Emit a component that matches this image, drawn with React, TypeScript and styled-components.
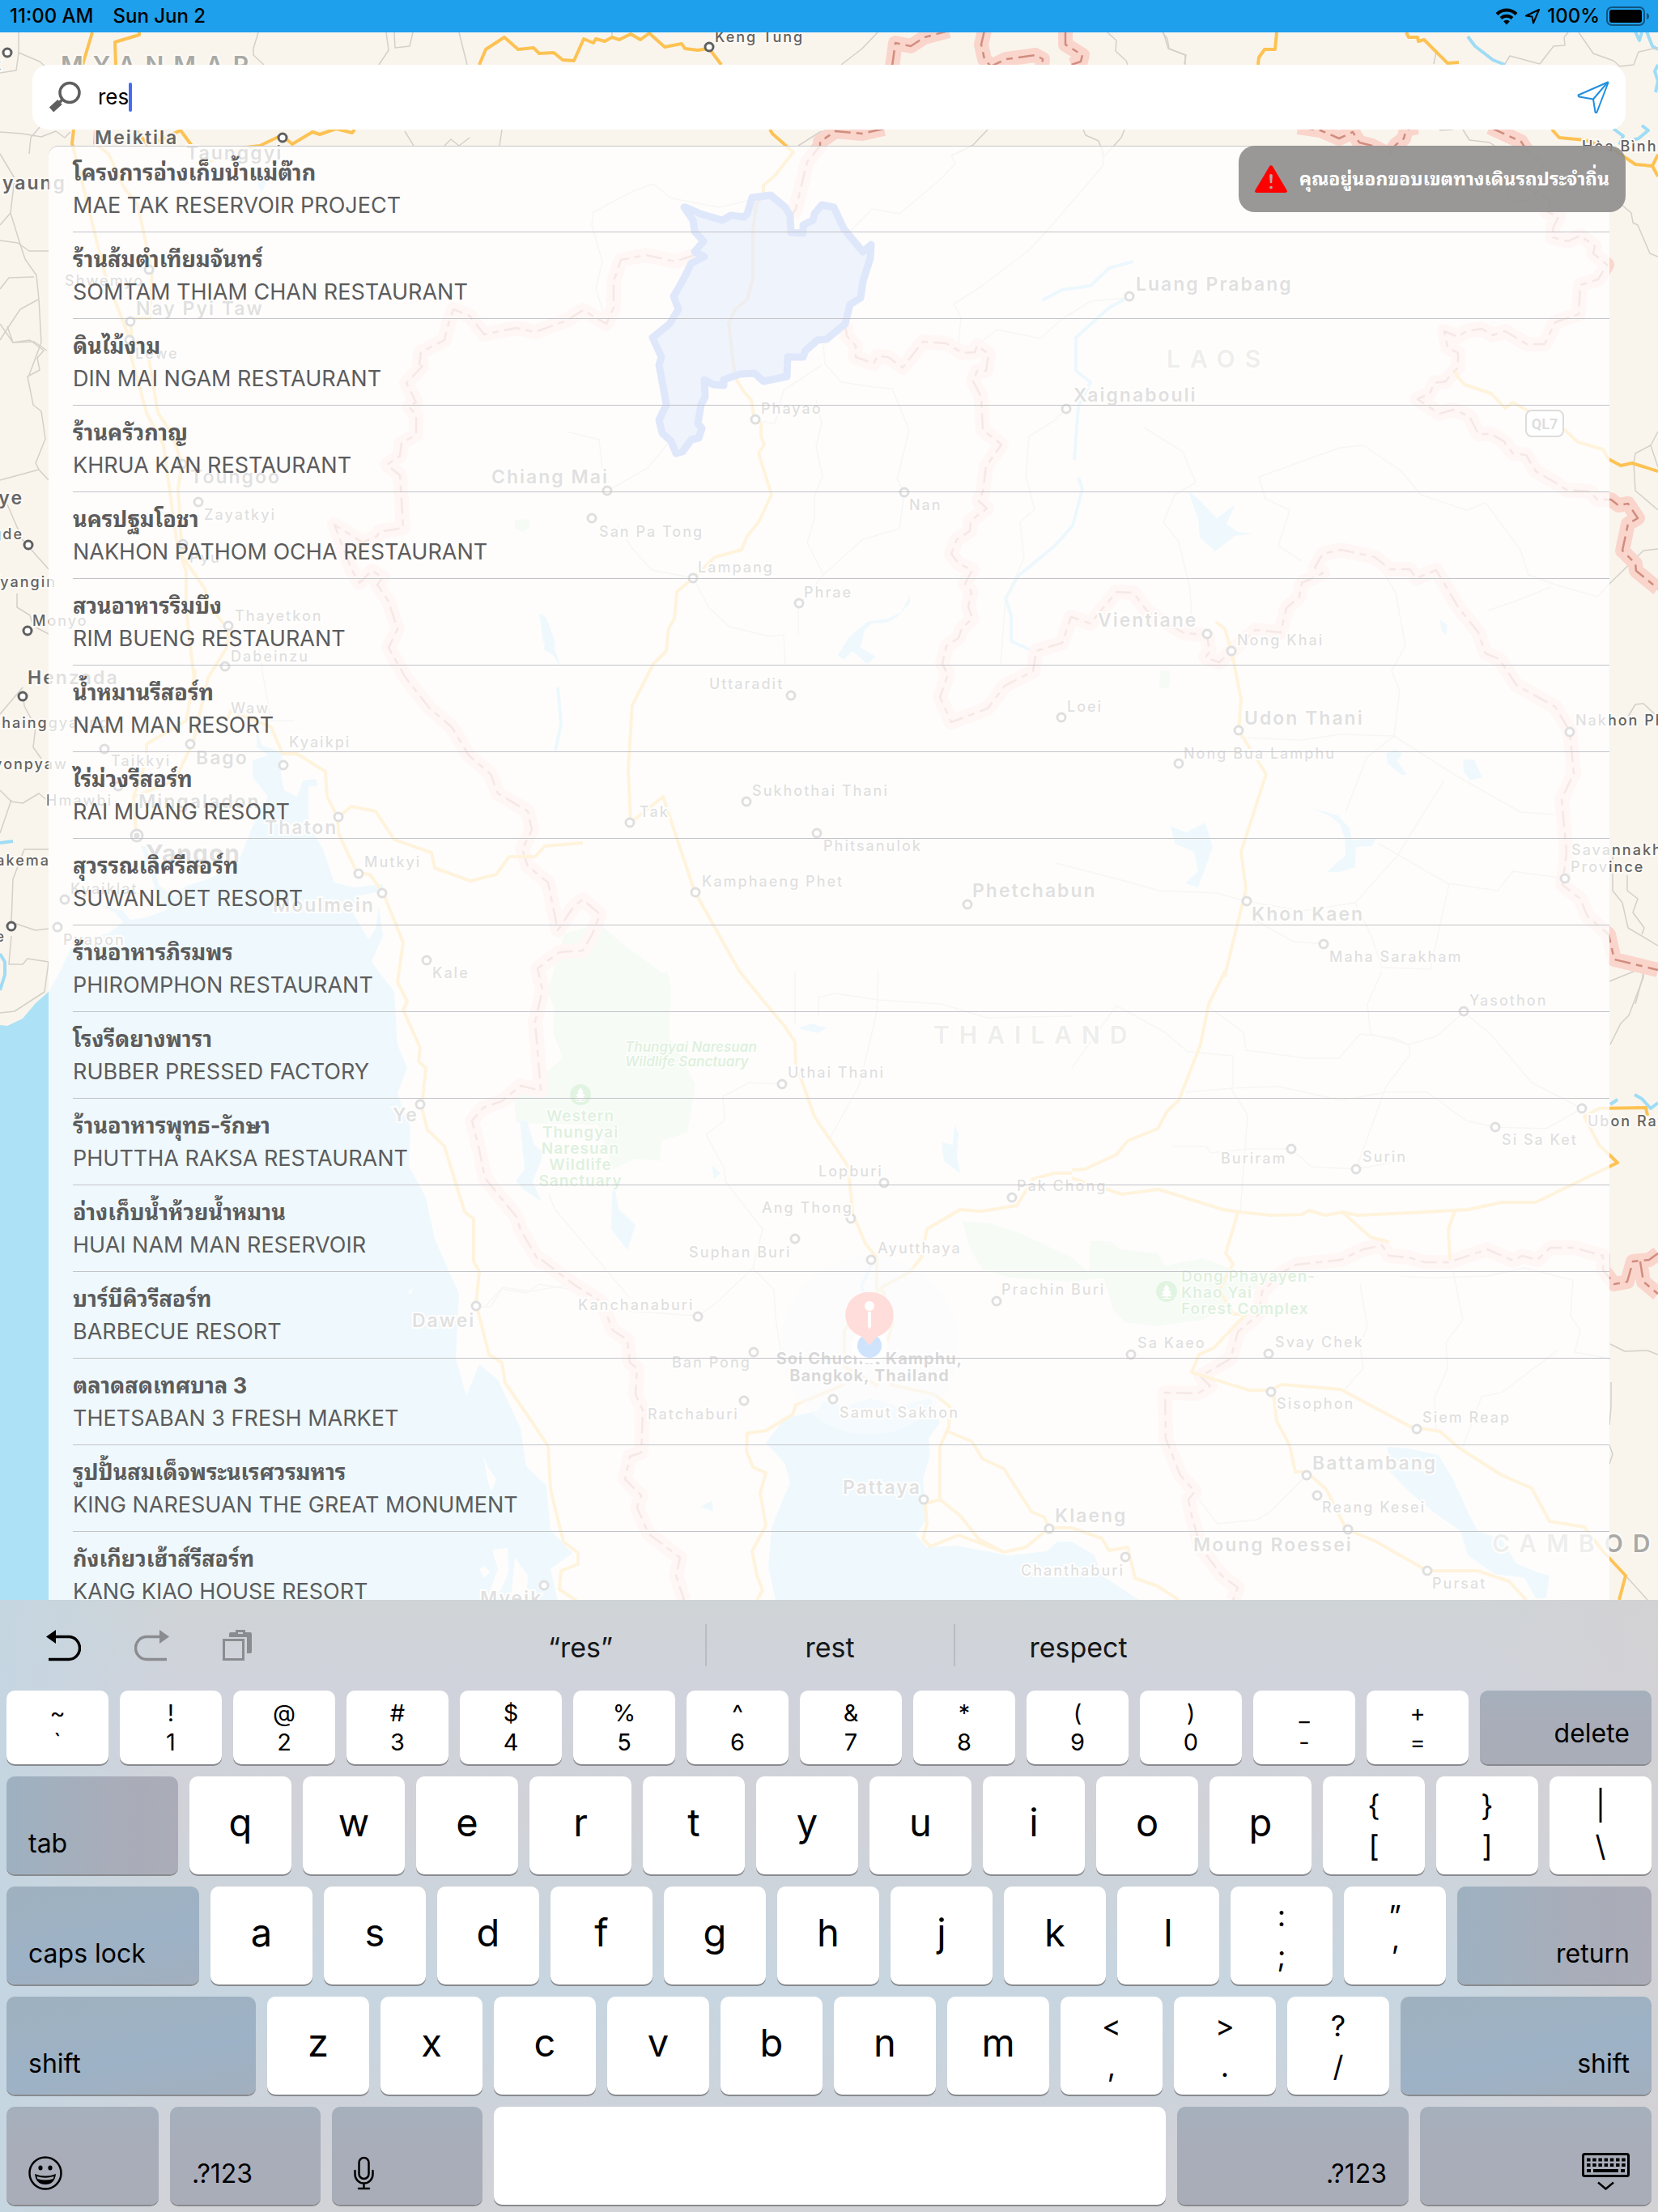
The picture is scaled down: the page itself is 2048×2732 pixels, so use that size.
import React, { useState } from "react";
import styled, { createGlobalStyle, css } from "styled-components";

/* ---------------------------------------------------------------- theme */

const ink = "#5c5c5c";
const sans = `Inter, "Noto Sans Thai Looped", Loma, "Noto Sans", "Noto Sans Thai", sans-serif`;

const GlobalStyle = createGlobalStyle`
  *, *::before, *::after { box-sizing: border-box; }
  body { margin: 0; background: #f9f5ed; font-family: ${sans}; color: #000; }
  button { font: inherit; color: inherit; border: 0; padding: 0; background: none; cursor: pointer; }
  ul { list-style: none; margin: 0; padding: 0; }
`;

/* ---------------------------------------------------------------- shell */

const Screen = styled.div`
  position: relative;
  display: flex;
  flex-direction: column;
  height: 100vh;
  overflow: hidden;
  background: #f9f5ed;
`;

const Backdrop = styled.svg`
  position: absolute;
  inset: 0;
  width: 100%;
  height: 100%;
`;

const StatusBar = styled.header`
  position: relative;
  display: flex;
  align-items: center;
  gap: 24px;
  height: 40px;
  padding: 0 10px 0 12px;
  background: #1fa0ec;
  font-size: 24px;
  line-height: 40px;
  font-weight: 500;
`;

const StatusIcons = styled.div`
  display: flex;
  align-items: center;
  gap: 8px;
  margin-left: auto;
`;

const Content = styled.main`
  position: relative;
  flex: 1;
  min-height: 0;
  display: flex;
  flex-direction: column;
  padding-top: 40px;
`;

/* --------------------------------------------------------------- search */

const SearchBar = styled.form`
  flex: none;
  display: flex;
  align-items: center;
  height: 80px;
  margin: 0 40px 20px;
  padding: 0 20px;
  border-radius: 20px;
  background: #fff;
`;

const SearchLabel = styled.label`
  display: flex;
  margin-right: 20px;
`;

const SearchInput = styled.input`
  field-sizing: content;
  border: 0;
  padding: 0;
  outline: none;
  background: none;
  font-family: ${sans};
  font-size: 26px;
  line-height: 40px;
  color: #000;
  caret-color: transparent;
`;

const Caret = styled.span`
  width: 4px;
  height: 36px;
  border-radius: 2px;
  background: #456cf0;
`;

const LocateButton = styled.button`
  display: flex;
  margin-left: auto;
`;

/* -------------------------------------------------------------- results */

const Results = styled.ul`
  flex: 1;
  min-height: 0;
  margin: 0 60px;
  overflow: hidden;
  border-top: 1px solid #c8c7cc;
  border-radius: 12px 0 0 0;
  background: rgba(255, 255, 255, 0.8);
`;

const Result = styled.li`
  height: 107px;
  margin-left: 30px;
  border-bottom: 1px solid #c3c2c7;

  &:first-child {
    height: 106px;
  }
`;

const ResultButton = styled.button`
  display: flex;
  flex-direction: column;
  justify-content: flex-end;
  width: 100%;
  height: 100%;
  padding-bottom: 12px;
  text-align: left;
  color: ${ink};
  white-space: nowrap;
`;

const ThaiName = styled.span`
  font-size: 27px;
  line-height: 40px;
  font-weight: 700;
`;

const LatinName = styled.span`
  font-size: 27px;
  line-height: 40px;
`;

const Alert = styled.div`
  position: absolute;
  top: 140px;
  right: 40px;
  display: flex;
  align-items: center;
  gap: 15px;
  height: 82px;
  padding: 0 20px;
  border-radius: 20px;
  background: rgba(142, 141, 140, 0.9);
  color: #fff;
  font-size: 23px;
  line-height: 40px;
  font-weight: 700;
  white-space: nowrap;
`;

/* ------------------------------------------------------------- keyboard */

const Keyboard = styled.section`
  position: relative;
  flex: none;
  display: flex;
  flex-direction: column;
  gap: 15px;
  padding: 0 8px 9px;
  background: linear-gradient(90deg, rgba(196, 214, 226, 0.9) 0, rgba(196, 214, 226, 0) 220px),
    linear-gradient(270deg, rgba(211, 209, 212, 0.9) 0, rgba(211, 209, 212, 0) 240px),
    linear-gradient(
      #cfd4d6 0%,
      #d0d3dc 14%,
      #d1d2d8 36%,
      #ccd4dc 48%,
      #c7d6e1 64%,
      #cad4dd 76%,
      #d0d2d9 86%,
      #d2d3d7 100%
    );
`;

const Toolbar = styled.div`
  display: grid;
  grid-template-columns: 1fr auto 1fr;
  align-items: center;
  height: 112px;
  margin-bottom: -15px;
`;

const EditTools = styled.div`
  display: flex;
  gap: 66px;
  padding-left: 49px;
`;

const ToolButton = styled.button`
  display: flex;
  color: #000;

  &:disabled {
    color: #8a8c90;
  }
`;

const Suggestions = styled.div`
  display: flex;
`;

const Suggestion = styled.button`
  width: 307px;
  height: 52px;
  padding-top: 6px;
  font-size: 34px;
  line-height: 46px;
  color: #15171a;

  & + & {
    border-left: 2px solid #b9bcc3;
  }
`;

const KeyRow = styled.div<{ $short?: boolean }>`
  display: flex;
  gap: 14px;
  height: ${(p) => (p.$short ? 91 : 121)}px;
`;

type Tone = "light" | "grey" | "cool" | "mixed";

const tones: Record<Tone, string> = {
  light: "#fff",
  grey: "linear-gradient(#a5b0bc, #a9adb9 45%, #a9adb8)",
  cool: "linear-gradient(170deg, #9fb1bf, #9db2c6 60%, #a2afbe)",
  mixed: "linear-gradient(90deg, #9eb1c1, #a8adb9 60%, #abacb7)",
};

const Key = styled.button<{ $grow?: number; $tone?: Tone; $align?: "start" | "end" }>`
  flex: ${(p) => p.$grow ?? 126} 1 0;
  min-width: 0;
  display: flex;
  align-items: center;
  justify-content: center;
  border-radius: 10px;
  background: ${(p) => tones[p.$tone ?? "light"]};
  box-shadow: 0 2px 0 #888a8e;
  font-size: 47px;
  line-height: 58px;
  ${(p) =>
    p.$align &&
    css`
      align-items: flex-end;
      justify-content: flex-${p.$align};
    `}
`;

const Caption = styled.span`
  display: flex;
  padding: 0 27px 18px;
  font-size: 32px;
  line-height: 40px;
  white-space: nowrap;
`;

const Letter = styled.span`
  padding-bottom: 8px;
`;

const Pair = styled.span<{ $small?: boolean }>`
  display: flex;
  flex-direction: column;
  align-items: center;
  font-size: ${(p) => (p.$small ? 29 : 36)}px;
  line-height: ${(p) => (p.$small ? 36 : 50)}px;
`;

/* ------------------------------------------------------------------ map */

/* Survey sheets: each one has its own grid, projected to map coordinates. */
const sheet =
  (x: number, y: number, w: number, h: number, cols: number, rows: number) =>
  (...p: number[]) => {
    const out: string[] = [];
    for (let i = 0; i < p.length; i += 2) {
      out.push(`${Math.round(x + (p[i] * w) / cols)},${Math.round(y + (p[i + 1] * h) / rows)}`);
    }
    return out.join(" ");
  };

const nw = sheet(0, 0, 700, 480, 1568, 1440);
const ne = sheet(1400, 0, 648, 560, 1568, 1568);
const north = sheet(700, 180, 700, 640, 1568, 1568);
const west = sheet(0, 780, 720, 640, 1568, 1568);
const sw = sheet(0, 1400, 720, 620, 1568, 1568);
const south = sheet(600, 1200, 724, 780, 1568, 1568);
const se = sheet(1324, 1200, 724, 780, 1568, 1568);
const nwLow = sheet(0, 400, 720, 480, 1568, 1440);
const east = sheet(1304, 480, 744, 760, 1568, 1568);
const top = sheet(640, 30, 860, 170, 1568, 510);
const whole = sheet(0, 0, 2048, 2732, 1175, 1568);

const seas = [
  `${west(0, 1190, 20, 1193, 60, 1170, 95, 1125, 130, 1090, 165, 1020, 190, 960, 240, 930, 290, 915, 330, 880, 310, 850, 265, 825, 330, 845, 350, 872, 395, 865, 450, 840, 420, 790, 400, 720, 380, 650, 395, 650, 430, 770, 470, 800, 500, 770, 560, 750, 640, 700, 675, 600, 720, 500, 680, 440, 680, 390, 720, 375, 690, 350, 690, 300, 705, 345, 760, 365, 755, 430, 765, 480, 800, 500, 815, 450, 850, 445, 855, 465, 830, 470, 830, 580, 870, 660, 900, 760, 950, 775, 1030, 765, 1030, 785, 960, 800, 950, 850, 990, 930, 1010, 900, 1020, 830, 1030, 920, 1000, 1000, 1060, 1090, 1070, 1250, 1095, 1320, 1070, 1400, 1105, 1500)} ${sw(1100, 100, 1145, 200, 1170, 330, 1235, 500, 1225, 700, 1255, 820, 1290, 720, 1340, 770, 1400, 920, 1415, 1040, 1470, 1100, 1480, 1240, 1540, 1310, 1480, 1360, 1500, 1460, 0, 1460)}`,
  `${south(750, 1170, 800, 1110, 890, 1090, 900, 1065, 960, 1080, 1030, 1060, 1100, 1080, 1190, 1060, 1215, 1120, 1185, 1160, 1190, 1200, 1170, 1260, 1175, 1320, 1180, 1360, 1150, 1400, 1180, 1430, 1260, 1425, 1400, 1450, 1500, 1440, 1530, 1415, 1568, 1415)} ${se(60, 1450, 80, 1500, 180, 1560)} ${south(775, 1560, 755, 1480, 765, 1380, 800, 1300, 815, 1270, 800, 1220)}`,
  se(845, 1180, 900, 1185, 980, 1200, 1020, 1260, 1060, 1340, 1085, 1390, 1150, 1410, 1190, 1470, 1240, 1490, 1278, 1500, 1270, 1556, 1240, 1556, 1210, 1505, 1130, 1495, 1060, 1450, 1040, 1390, 965, 1340, 900, 1290, 850, 1240),
  east(345, 262, 375, 285, 420, 330, 468, 295, 445, 345, 475, 365, 515, 370, 465, 375, 415, 415, 375, 380, 370, 335),
  east(300, 1115, 340, 1130, 390, 1105, 408, 1170, 395, 1210, 370, 1270, 338, 1260, 370, 1230, 360, 1180, 310, 1160),
  east(670, 1070, 735, 1088, 765, 1120, 772, 1150, 835, 1145, 825, 1165, 782, 1168, 780, 1220, 740, 1232, 705, 1232, 735, 1205, 755, 1190, 752, 1145, 740, 1110, 715, 1090),
  east(860, 930, 885, 918, 902, 930, 890, 950, 915, 985, 900, 985, 865, 955),
  east(1060, 945, 1090, 945, 1110, 990, 1080, 998, 1062, 975),
  east(998, 588, 1018, 600, 1017, 630, 1005, 618),
  north(750, 1540, 780, 1490, 805, 1465, 830, 1440, 890, 1432, 925, 1410, 950, 1360, 950, 1385, 915, 1425, 885, 1442, 845, 1445, 825, 1465, 812, 1520, 855, 1545, 830, 1568, 790, 1530, 765, 1555),
  west(1480, 0, 1495, 60, 1510, 110, 1488, 70, 1462, 55),
  nwLow(1450, 1070, 1470, 1090, 1495, 1180, 1480, 1220, 1462, 1180),
  south(90, 370, 110, 370, 130, 430, 155, 450, 125, 520, 150, 570, 100, 540, 80, 520, 105, 490),
  south(340, 510, 355, 590, 400, 630, 380, 692, 335, 640),
  south(1255, 380, 1265, 400, 1260, 460, 1270, 500, 1225, 470, 1220, 425, 1250, 430),
  south(835, 140, 870, 128, 915, 140, 885, 152),
  south(605, 480, 628, 500, 610, 515),
  south(575, 1328, 605, 1312, 608, 1340),
  nw(720, 640, 740, 620, 735, 680, 725, 710, 715, 690),
];

const islands = [
  sw(1300, 1005, 1312, 1040, 1335, 1080, 1322, 1120, 1310, 1080),
  sw(1325, 1300, 1365, 1295, 1368, 1370, 1345, 1430, 1315, 1440, 1340, 1360),
  sw(1385, 1325, 1420, 1380, 1415, 1456, 1375, 1456, 1380, 1380),
  sw(1290, 1360, 1305, 1350, 1318, 1370, 1302, 1388),
  sw(1095, 495, 1110, 484, 1104, 502),
];

const parks = [
  `${whole(392, 690, 400, 662, 425, 655, 440, 668, 470, 690)} ${south(485, 0, 497, 40, 490, 160, 515, 200, 560, 280, 540, 400, 470, 420, 465, 470, 400, 465, 340, 490, 300, 380, 80, 375, 75, 290, 150, 260, 205, 215, 180, 150, 185, 90, 165, 50)}`,
  `${south(1275, 620, 1350, 625, 1430, 650, 1568, 710)} ${se(45, 745, 50, 670, 105, 670, 130, 690, 230, 700, 250, 730, 350, 712, 430, 740, 520, 780, 440, 800, 380, 850, 350, 865, 225, 880, 140, 870, 110, 840, 85, 760, 0, 770)} ${south(1400, 760, 1330, 740, 1295, 690)}`,
  east(272, 718, 298, 718, 298, 760, 270, 765),
  nwLow(1385, 725, 1425, 722, 1425, 760, 1405, 770, 1385, 760),
];

const rivers = [
  north(1568, 350, 1500, 370, 1450, 425, 1370, 435, 1315, 468),
  north(1555, 458, 1500, 490, 1410, 580, 1410, 680, 1450, 715, 1415, 790, 1405, 950),
  north(1415, 1005, 1427, 1040, 1400, 1150, 1350, 1210, 1250, 1300, 1215, 1370, 1230, 1420, 1230, 1500, 1290, 1530),
  ne(1000, 125, 1020, 160, 1075, 208, 1110, 224),
  ne(1500, 110, 1512, 140, 1520, 112),
  ne(1535, 110, 1550, 160, 1568, 170),
  ne(1568, 225, 1558, 245, 1568, 280, 1560, 320),
  ne(1435, 445, 1465, 470, 1455, 495, 1510, 480, 1540, 450, 1520, 435),
  west(0, 640, 35, 635),
  west(0, 975, 12, 1000, 14, 1040, 0, 1085),
  se(1440, 330, 1460, 318),
  se(1505, 305, 1525, 315, 1548, 340, 1568, 325),
  west(1500, 170, 1510, 280, 1495, 360),
  south(1030, 730, 1005, 780, 1020, 820),
  east(1455, 1435, 1500, 1462, 1568, 1478),
];

const lanes = [
  nw(52, 120, 52, 195, 110, 228, 125, 245),
  nw(715, 120, 700, 180, 702, 205, 730, 240),
  nw(1068, 120, 1075, 185, 1048, 240),
  nw(1090, 120, 1092, 178, 1133, 170, 1143, 120),
  nw(1270, 120, 1292, 240),
  nw(0, 490, 60, 495, 115, 508, 155, 485, 180, 510, 195, 490),
  nw(0, 270, 45, 260, 52, 195),
  nw(110, 470, 85, 510, 80, 570),
  nw(0, 570, 40, 660, 30, 790, 55, 905, 70, 960, 100, 1020, 108, 1110, 115, 1270, 80, 1390),
  nw(30, 790, 0, 835),
  nw(0, 890, 50, 900, 80, 930, 135, 930),
  nw(0, 1260, 25, 1210, 55, 1145, 105, 1110),
  nw(0, 1070, 25, 1028, 95, 1025),
  nw(0, 1200, 35, 1270, 95, 1265, 130, 1300),
  nw(1120, 485, 1145, 540),
  nw(1230, 540, 1248, 515, 1270, 540, 1300, 510),
  nw(1388, 480, 1382, 540),
  nwLow(20, 10, 35, 70, 80, 60, 118, 100, 100, 125, 107, 170, 75, 195, 90, 300, 110, 325, 123, 425, 95, 515, 105, 540, 131, 580),
  nwLow(0, 578, 105, 540),
  nwLow(20, 670, 60, 800, 131, 910),
  nwLow(45, 1000, 45, 1050, 80, 1080, 90, 1120, 131, 1150),
  west(60, 180, 65, 225, 95, 290, 90, 350, 112, 385),
  west(60, 170, 0, 250),
  west(0, 480, 30, 515, 60, 520, 105, 490, 131, 515),
  west(30, 510, 0, 610),
  west(131, 660, 65, 660, 35, 750, 30, 880, 95, 905, 131, 900),
  west(30, 920, 25, 1008, 60, 1008, 75, 990, 131, 1000, 120, 1090, 40, 1150, 0, 1153),
  top(211, 30, 211, 45),
  top(810, 30, 775, 90, 728, 150),
  top(1328, 30, 1347, 60, 1345, 100, 1370, 135, 1372, 150),
  top(1452, 30, 1463, 55, 1466, 90, 1503, 113, 1502, 150),
  top(1058, 390, 1022, 450, 975, 490),
  top(1273, 390, 1278, 412, 1308, 432, 1320, 490, 1358, 420, 1365, 390),
  top(630, 450, 680, 400, 710, 392),
  ne(90, 112, 105, 168, 157, 190, 153, 222),
  ne(905, 180, 898, 222),
  ne(1215, 222, 1255, 160, 1290, 158, 1288, 130, 1300, 112),
  ne(1330, 112, 1375, 185, 1435, 210, 1455, 230, 1495, 225, 1510, 180, 1568, 165),
  ne(1110, 222, 1125, 192, 1215, 220),
  ne(985, 448, 1005, 485, 1065, 492, 1100, 520),
  ne(915, 450, 955, 448),
  ne(1440, 690, 1487, 735, 1493, 770, 1508, 778, 1545, 875, 1568, 887),
  east(1568, 110, 1548, 145, 1568, 200),
  east(1548, 145, 1510, 165, 1505, 190, 1508, 260, 1568, 310),
  east(1442, 497, 1530, 412, 1568, 408),
  east(1490, 835, 1508, 805, 1530, 802, 1560, 830),
  east(1450, 1190, 1450, 1280, 1475, 1310, 1490, 1375, 1568, 1420),
  east(1488, 1240, 1488, 1280, 1515, 1300, 1503, 1335, 1533, 1375, 1525, 1390),
  east(1442, 1510, 1530, 1475, 1528, 1500, 1508, 1568),
  se(1440, 180, 1468, 128, 1490, 108, 1528, 15, 1528, 0),
  se(1440, 925, 1480, 943, 1540, 940, 1568, 950),
  se(1443, 1020, 1443, 1080, 1438, 1125),
  se(1438, 1175, 1446, 1198, 1438, 1222),
  se(1482, 1500, 1540, 1560),
  north(110, 540, 80, 430, 98, 350, 70, 240, 75, 200, 180, 140, 240, 115, 290, 160, 420, 185, 510, 165),
  north(785, 260, 845, 190, 920, 205, 1030, 105, 1075, 55, 1065, 30, 1120, 0),
  north(1480, 0, 1485, 60, 1350, 230, 1280, 315, 1150, 425, 1070, 480, 1090, 520, 1085, 600),
  north(1140, 600, 1190, 555, 1310, 582, 1370, 525, 1450, 470, 1550, 460),
  north(710, 600, 715, 660, 760, 715, 850, 730, 900, 735, 948, 860, 915, 1010, 934, 1048, 920, 1160, 820, 1190, 710, 1298, 640, 1395, 640, 1480),
  north(520, 830, 575, 840, 600, 740, 705, 665),
  north(690, 770, 705, 840, 690, 910, 708, 1000, 685, 1060, 685, 1130, 665, 1200, 710, 1298),
  north(0, 865, 90, 890, 100, 1000, 110, 1045, 225, 975, 290, 890),
  north(140, 1150, 180, 1215, 235, 1285, 349, 1308, 395, 1400, 450, 1455, 560, 1485, 600, 1480, 605, 1568),
  north(1382, 797, 1350, 830, 1280, 880, 1270, 1000, 1295, 1100, 1255, 1140, 1265, 1250, 1215, 1370, 1200, 1568),
  east(230, 100, 330, 160, 365, 240, 310, 270, 280, 340, 320, 390, 350, 510, 355, 590),
  east(740, 150, 530, 225, 545, 280, 610, 310, 580, 400, 640, 440),
  east(740, 150, 800, 145, 900, 210, 950, 270, 1070, 310, 1120, 290, 1210, 410, 1230, 475, 1300, 500, 1410, 530, 1442, 497),
  east(1125, 565, 1200, 540, 1290, 505),
  east(850, 460, 885, 520, 910, 655, 875, 720, 895, 770, 880, 885, 810, 940, 755, 1080),
  east(480, 890, 640, 895, 740, 880, 880, 885, 1040, 985, 1210, 1080, 1300, 1085),
  east(0, 1210, 180, 1255, 270, 1280, 420, 1285, 497, 1305, 640, 1330, 780, 1310, 890, 1190, 1010, 1000),
  east(840, 1160, 1020, 1260, 1150, 1280, 1190, 1230, 1325, 1248),
  east(697, 1415, 620, 1410, 510, 1350),
  east(780, 1310, 820, 1390, 850, 1475, 975, 1480, 1025, 1260),
  se(0, 240, 120, 85, 250, 150, 310, 200, 430, 210, 430, 290, 305, 300),
  se(370, 90, 460, 150, 465, 195, 625, 215, 715, 215, 770, 155, 860, 165, 900, 180, 975, 160, 1048, 100),
  se(830, 0, 790, 80, 800, 155, 900, 180, 905, 205, 840, 285, 760, 490),
  se(425, 290, 555, 285, 720, 320, 840, 300, 950, 300, 1055, 370, 1132, 386, 1270, 390, 1364, 340),
  se(1048, 100, 1120, 155, 1230, 275, 1364, 340),
  se(270, 435, 360, 435, 370, 450, 470, 440, 587, 440, 640, 485, 760, 490, 880, 470),
  se(425, 290, 470, 355, 450, 597),
  se(770, 775, 790, 880, 770, 930, 780, 985, 730, 1037),
  se(880, 755, 960, 760, 1110, 755, 1210, 735, 1340, 765, 1335, 855, 1360, 890, 1345, 945, 1440, 960),
  se(1020, 745, 1045, 865, 1000, 920, 1005, 985, 970, 1060, 975, 1135),
  se(1045, 1180, 1095, 1055, 1150, 1045, 1300, 940),
  se(628, 1250, 530, 1340, 495, 1360, 390, 1370, 340, 1310),
  south(828, 0, 828, 130),
  south(890, 110, 890, 65, 935, 55, 1050, 70, 1220, 80, 1340, 115, 1568, 110),
  south(1050, 0, 1045, 100, 1000, 280, 920, 415),
  south(790, 280, 705, 275, 635, 310, 638, 370, 590, 405, 638, 490, 640, 520, 740, 640, 715, 735, 620, 820, 567, 856),
  south(0, 830, 45, 785, 120, 795, 210, 780, 340, 840, 565, 855),
  south(170, 550, 185, 590, 385, 810),
  south(715, 735, 770, 790, 775, 860, 790, 950),
  sw(1290, 540, 1320, 540, 1350, 485, 1415, 498, 1450, 470, 1550, 490),
  west(690, 0, 705, 120, 730, 270, 790, 270),
];

const roads = [
  nw(255, 120, 228, 240),
  nw(385, 120, 385, 130, 317, 157, 320, 240),
  `${nw(1325, 240, 1345, 183, 1395, 137)} ${top(0, 93, 35, 88, 48, 108, 80, 104, 100, 132, 125, 135, 147, 55, 170, 70, 175, 55, 195, 63, 212, 47, 228, 58, 253, 35, 275, 57, 295, 33, 330, 84, 368, 72, 376, 90, 405, 97, 430, 90, 457, 150)}`,
  `${top(567, 390, 572, 405, 620, 475)} ${north(625, 22, 575, 90, 545, 120, 545, 150, 525, 180, 515, 260, 515, 400, 500, 465, 465, 495, 447, 540, 465, 700, 490, 745, 510, 770, 520, 830, 538, 840, 537, 880, 547, 905, 530, 930, 567, 1055, 530, 1140, 500, 1180, 483, 1222, 410, 1245, 350, 1308, 305, 1350, 297, 1430, 283, 1460, 275, 1530, 240, 1568)} ${whole(448, 500, 445, 545, 447, 583, 470, 565, 492, 632, 524, 688)} ${south(770, 105, 800, 135, 828, 175, 830, 230, 880, 360, 970, 485, 980, 600, 1015, 675, 1047, 710, 1047, 790)}`,
  `${nw(203, 480, 200, 530, 240, 740, 290, 1010, 355, 1240)} ${nwLow(350, 110, 395, 330, 440, 450, 475, 800, 500, 920, 500, 1060, 522, 1320)} ${west(525, 120, 500, 270, 395, 340, 395, 390, 360, 500, 365, 610)}`,
  `${nw(265, 480, 262, 530, 300, 570, 345, 700, 380, 760, 420, 1010, 415, 1180, 360, 1180, 365, 1260, 410, 1310)} ${nwLow(425, 330, 460, 400, 490, 520, 480, 610, 490, 860, 550, 980, 560, 1040, 615, 1130, 610, 1200)} ${west(560, 140, 520, 330, 470, 450, 360, 500)}`,
  nw(375, 480, 410, 540, 500, 483, 530, 540),
  nw(580, 600, 680, 545, 720, 540, 780, 500, 808, 535, 865, 488, 885, 498, 930, 478, 975, 492, 980, 480),
  `${west(610, 270, 620, 240, 730, 290, 760, 370, 800, 370, 875, 425, 880, 500, 908, 560, 910, 610, 960, 730, 995, 735, 1030, 790, 1085, 940, 1070, 1060, 1095, 1120, 1085, 1145, 1130, 1260, 1125, 1300, 1145, 1320, 1135, 1440, 1150, 1510)} ${sw(1160, 0, 1195, 40, 1250, 245, 1275, 265, 1275, 400, 1290, 430, 1280, 530, 1315, 690, 1350, 715, 1360, 780, 1430, 900, 1475, 975, 1480, 1110, 1500, 1205, 1515, 1275, 1555, 1310, 1555, 1345, 1510, 1365, 1505, 1425, 1550, 1460)}`,
  west(910, 560, 945, 530, 1010, 545, 1060, 630, 1160, 670, 1170, 715, 1265, 755, 1335, 735, 1370, 680, 1440, 680, 1465, 650, 1568, 640),
  south(1568, 500, 1520, 500, 1465, 515, 1420, 580, 1325, 595, 1270, 592, 1180, 640, 1165, 710, 1135, 745, 1060, 785, 1090, 870, 1075, 920),
  south(1060, 785, 1010, 830, 960, 890, 960, 980, 1050, 1030),
  south(960, 1025, 830, 1075, 820, 1100, 750, 1140, 700, 1145, 698, 1190, 715, 1230, 750, 1245, 735, 1295, 750, 1375, 713, 1440, 725, 1500, 740, 1535, 725, 1560),
  south(1080, 1025, 1200, 1050, 1240, 1080, 1238, 1130, 1215, 1180, 1215, 1310, 1175, 1320, 1180, 1370, 1170, 1410, 1190, 1428, 1265, 1400, 1385, 1442, 1445, 1430, 1507, 1382, 1568, 1382),
  south(1215, 1310, 1270, 1350, 1320, 1410, 1385, 1442),
  south(1230, 1140, 1300, 1165, 1330, 1210, 1385, 1235, 1460, 1340, 1495, 1355, 1507, 1382),
  se(0, 1382, 80, 1408, 100, 1438, 150, 1430, 170, 1505, 230, 1525, 285, 1560),
  `${se(0, 492, 35, 490, 120, 455, 150, 420, 230, 390, 255, 345, 285, 320, 345, 180, 365, 80, 410, 0)} ${east(440, 1495, 495, 1275, 482, 1180, 547, 982, 477, 870, 482, 790, 457, 668, 440, 612, 417, 595)}`,
  se(0, 512, 135, 552, 232, 541, 405, 592, 450, 597, 535, 605, 615, 603, 635, 593, 678, 605, 725, 597, 765, 605, 900, 600, 1060, 592, 1150, 572, 1240, 572, 1460, 475, 1410, 430, 1370, 360, 1410, 340, 1535, 337, 1540, 358),
  se(725, 600, 800, 660, 850, 672),
  se(1025, 595, 1008, 640, 1012, 715),
  se(445, 597, 430, 640, 412, 700, 432, 725, 395, 790, 430, 850, 465, 850, 380, 935, 340, 950, 320, 995, 475, 1040, 530, 1040, 560, 1025, 720, 1037, 905, 1130, 985, 1142, 1035, 1182, 1150, 1250, 1230, 1283, 1278, 1365, 1370, 1380, 1420, 1440, 1482, 1500, 1465, 1560),
  se(540, 1045, 548, 1115, 583, 1175, 597, 1243, 628, 1243, 680, 1285, 735, 1385, 810, 1413, 950, 1487, 1085, 1487, 1170, 1513, 1215, 1560),
  `${ne(960, 1285, 970, 1305, 990, 1330, 1070, 1362)} ${east(1135, 15, 1170, 50, 1190, 35, 1270, 80, 1325, 105, 1360, 137, 1425, 155, 1440, 180, 1470, 195, 1500, 190, 1568, 210)}`,
  ne(428, 112, 423, 170, 393, 170, 375, 200, 372, 224),
  ne(815, 112, 822, 128, 850, 128, 852, 142, 868, 138, 905, 180, 940, 218, 972, 216),
  ne(1250, 448, 1273, 475, 1350, 485, 1440, 520, 1500, 568, 1550, 575, 1568, 535),
  ne(1550, 575, 1568, 610),
];

const borders = [
  `${top(825, 388, 775, 405, 715, 395, 680, 435)} ${north(700, 0, 665, 50, 645, 140, 635, 190, 622, 210)}`,
  top(842, 155, 850, 70, 885, 82, 915, 48, 970, 25),
  top(1050, 25, 1042, 75, 1050, 130, 1065, 155, 1100, 130, 1165, 115, 1182, 128, 1180, 155),
  top(1232, 25, 1232, 75, 1270, 115, 1268, 138, 1246, 150),
  ne(490, 440, 560, 452, 615, 478, 655, 455, 675, 493, 715, 503, 765, 535, 785, 500, 808, 480, 815, 448, 850, 440),
  `${ne(1065, 440, 1160, 490, 1175, 520, 1230, 560, 1210, 610, 1150, 620, 1110, 665, 1130, 700, 1180, 695, 1210, 660, 1245, 700, 1235, 730, 1270, 750, 1255, 785, 1250, 820, 1300, 835, 1335, 815, 1380, 850, 1375, 875, 1415, 915, 1390, 965, 1335, 985, 1330, 1085, 1260, 1115, 1230, 1190, 1175, 1190, 1110, 1145, 1075, 1160, 1040, 1138, 995, 1145, 970, 1165, 930, 1145, 940, 1200, 970, 1220, 970, 1270, 945, 1300, 935, 1320, 900, 1325, 885, 1360, 850, 1380, 915, 1430, 955, 1418, 1005, 1440, 1030, 1500, 1070, 1500, 1110, 1530)} ${east(1170, 140, 1190, 165, 1225, 170, 1250, 210, 1300, 240, 1330, 258, 1390, 262, 1410, 282, 1445, 282, 1465, 297, 1490, 292, 1515, 330, 1490, 345, 1475, 412, 1510, 445, 1512, 465, 1568, 510)}`,
  `${north(770, 540, 775, 575, 800, 605, 800, 640, 850, 660, 860, 637, 890, 640, 930, 672, 985, 592, 1050, 597, 1095, 628, 1130, 625, 1135, 605, 1168, 630, 1160, 680, 1135, 680, 1125, 712, 1147, 760, 1152, 860, 1202, 905, 1160, 970, 1152, 1045, 1140, 1075, 1162, 1098, 1118, 1135, 1115, 1165, 1080, 1190, 1065, 1235, 1085, 1265, 1122, 1283, 1102, 1325, 1120, 1350, 1110, 1395, 1122, 1430, 1092, 1460, 1085, 1490, 1050, 1515, 1040, 1568)} ${whole(672, 478, 666, 494, 674, 512, 700, 502, 712, 486, 732, 476)} ${north(1300, 1530, 1370, 1505, 1395, 1425, 1450, 1445, 1520, 1350, 1568, 1352)} ${east(240, 570, 330, 620, 395, 630, 400, 670, 390, 685, 425, 698, 457, 668, 520, 615, 585, 620, 600, 560, 635, 530, 640, 495, 695, 470, 675, 455, 695, 420, 745, 410, 830, 430, 870, 460, 920, 460, 940, 483, 990, 463, 1050, 560, 1100, 620, 1120, 675, 1155, 690, 1200, 755, 1300, 810, 1338, 872, 1348, 980, 1318, 1045, 1330, 1180, 1320, 1265, 1365, 1300, 1385, 1345, 1440, 1390, 1455, 1455, 1568, 1482)}`,
  `${north(355, 330, 300, 350, 220, 330, 150, 345, 130, 410, 130, 490, 110, 540, 45, 498, 0, 530)} ${nw(1480, 1230, 1430, 1215, 1340, 1240, 1300, 1170, 1255, 1145, 1240, 1200, 1230, 1260, 1165, 1305, 1160, 1350)} ${nwLow(1130, 110, 1135, 160, 1093, 220, 1120, 290, 1100, 305, 1120, 340, 1120, 410, 1080, 440, 1075, 490, 1040, 522, 1075, 560, 1085, 755, 1020, 770, 1015, 785, 975, 810, 900, 745, 945, 910, 968, 960, 1000, 915, 1030, 940, 1015, 965, 1045, 1030, 1070, 1130, 1045, 1200)} ${west(1090, 140, 1155, 230, 1215, 290, 1260, 375, 1320, 430, 1340, 490, 1420, 545, 1430, 600, 1405, 660, 1420, 710, 1475, 760, 1500, 905, 1545, 830, 1568, 810)} ${whole(425, 648, 420, 662)} ${west(1568, 965, 1505, 970, 1445, 1020, 1460, 1085, 1440, 1180, 1455, 1390, 1400, 1375, 1350, 1420, 1300, 1440, 1270, 1480, 1290, 1568)} ${sw(1305, 140, 1390, 260, 1400, 300, 1450, 400)} ${south(150, 715, 240, 780, 310, 820, 340, 890, 380, 915, 385, 970, 405, 985, 400, 1050, 420, 1090, 415, 1195, 385, 1205, 372, 1260, 415, 1300, 405, 1330, 435, 1395, 520, 1455, 510, 1500, 530, 1560)}`,
  se(1568, 700, 1545, 715, 1500, 720, 1485, 770, 1450, 775, 1420, 740, 1420, 705, 1345, 685, 1280, 685, 1245, 715, 1205, 705, 1180, 718, 1110, 690, 1010, 722, 945, 722, 900, 710, 850, 705, 830, 680, 780, 690, 720, 715, 600, 728, 565, 745, 510, 795, 500, 850, 445, 895, 425, 960, 345, 1005, 370, 1030, 335, 1048, 250, 1045, 252, 1160, 290, 1250, 330, 1290, 312, 1310, 320, 1350, 345, 1430, 400, 1500, 445, 1530, 430, 1560),
  se(1520, 720, 1530, 770, 1568, 800),
];

const zone = north(325, 185, 350, 225, 355, 260, 378, 290, 355, 320, 380, 335, 345, 355, 320, 410, 295, 455, 308, 495, 285, 540, 238, 580, 262, 640, 255, 665, 268, 740, 275, 785, 255, 830, 265, 870, 290, 895, 303, 930, 320, 925, 345, 890, 365, 885, 375, 855, 362, 840, 372, 785, 383, 760, 380, 708, 405, 722, 435, 725, 435, 708, 480, 690, 520, 688, 545, 712, 610, 698, 612, 640, 655, 640, 660, 620, 695, 588, 720, 585, 770, 540, 785, 480, 812, 460, 820, 410, 840, 340, 843, 300, 820, 320, 785, 275, 765, 250, 740, 185, 705, 180, 685, 205, 680, 225, 655, 240, 655, 265, 620, 262, 618, 210, 605, 185, 565, 150, 512, 157, 500, 205, 490, 215, 455, 210, 430, 225, 370, 205, 330, 185);

/* Town rings: x, y on the map. */
const towns: [number, number][] = [
  [9, 65], [876, 58], [349, 170], [184, 333], [161, 397], [160, 420], [225, 573], [245, 620], [226, 672],
  [35, 673], [34, 779], [28, 860], [282, 773], [278, 823], [350, 945], [235, 919], [129, 925], [146, 971],
  [418, 1009], [443, 1079], [472, 1103], [80, 1111], [14, 1144], [71, 1145], [527, 1186], [519, 1364],
  [588, 1613], [672, 1958], [933, 518], [750, 606], [731, 640], [856, 714], [987, 745], [1117, 608], [1395, 366],
  [1317, 505], [1491, 783], [1521, 804], [1530, 902], [1456, 943], [1311, 886], [977, 859], [922, 990], [1009, 1029],
  [778, 1016], [859, 1102], [1195, 1117], [1540, 1113], [1635, 1166], [1939, 904], [1933, 1085], [1808, 1249],
  [966, 1339], [1092, 1461], [1051, 1505], [1076, 1556], [982, 1530], [862, 1626], [931, 1670], [919, 1730],
  [1029, 1728], [1141, 1852], [1296, 1888], [1250, 1479], [1231, 1607], [1397, 1673], [1567, 1672], [1570, 1719],
  [1750, 1765], [1614, 1822], [1627, 1847], [1665, 1889], [1763, 1940], [1390, 1923], [1595, 1419], [1675, 1444],
  [1847, 1392], [1954, 1369],
];

type Kind = "town" | "city" | "capital" | "country";
interface Place {
  name: string;
  x: number;
  y: number;
  kind: Kind;
  end: boolean;
}
const place = (kind: Kind, end: boolean, rows: [string, number, number][]): Place[] =>
  rows.map(([name, x, y]) => ({ name, x, y, kind, end }));

const places: Place[] = [
  ...place("country", false, [["MYANMAR", 75, 91], ["LAOS", 1441, 454], ["THAILAND", 1153, 1289], ["CAMBODIA", 1843, 1917]]),
  ...place("capital", false, [["Yangon", 180, 1065]]),
  ...place("city", false, [
    ["Meiktila", 117, 178], ["Taunggyi", 230, 197], ["Nay Pyi Taw", 168, 389], ["Toungoo", 235, 597],
    ["Henzada", 34, 845], ["Bago", 242, 944], ["Mingaladon", 171, 998], ["Thaton", 327, 1030],
    ["Moulmein", 337, 1126], ["Ye", 485, 1385], ["Dawei", 509, 1639], ["Myeik", 593, 1982],
    ["Chiang Mai", 607, 597], ["Luang Prabang", 1403, 359], ["Xaignabouli", 1326, 496], ["Vientiane", 1356, 774],
    ["Udon Thani", 1537, 895], ["Khon Kaen", 1546, 1137], ["Phetchabun", 1201, 1108], ["Pattaya", 1041, 1845],
    ["Klaeng", 1303, 1880], ["Battambang", 1621, 1815], ["Moung Roessei", 1474, 1916],
  ]),
  ...place("city", true, [["Pye", 29, 623], ["Yenangyaung", 82, 234]]),
  ...place("town", true, [
    ["Chauk", 3, 86], ["Paungde", 29, 666], ["Kyangin", 70, 725], ["Kyonpyaw", 84, 950], ["Wakema", 62, 1069], ["Bogale", 7, 1163],
  ]),
  ...place("town", false, [
    ["Keng Tung", 883, 52], ["Hòa Bình", 1954, 187], ["Shwemyo", 80, 353], ["Lewe", 167, 443], ["Zayatkyi", 252, 642],
    ["Pyu", 234, 695], ["Thayetkon", 290, 767], ["Monyo", 40, 773], ["Dabeinzu", 285, 817], ["Waw", 285, 881],
    ["thainggyaung", -6, 899], ["Kyaikpi", 357, 923], ["Taikkyi", 137, 946], ["Hmawbi", 57, 995], ["Mutkyi", 450, 1071],
    ["Kyaiklat", 87, 1104], ["Pyapon", 78, 1167], ["Kale", 534, 1208], ["Phayao", 940, 511], ["Nan", 1123, 630],
    ["San Pa Tong", 740, 663], ["Lampang", 862, 707], ["Phrae", 993, 738], ["Nong Khai", 1528, 797], ["Loei", 1318, 879],
    ["Nong Bua Lamphu", 1462, 937], ["Uttaradit", 876, 851], ["Sukhothai Thani", 929, 983], ["Tak", 790, 1009],
    ["Phitsanulok", 1017, 1051], ["Kamphaeng Phet", 867, 1095], ["Maha Sarakham", 1642, 1188], ["Yasothon", 1815, 1242],
    ["Uthai Thani", 973, 1331], ["Lopburi", 1011, 1453], ["Ang Thong", 941, 1498], ["Ayutthaya", 1084, 1548],
    ["Suphan Buri", 851, 1553], ["Kanchanaburi", 714, 1618], ["Ban Pong", 830, 1689], ["Ratchaburi", 800, 1753],
    ["Samut Sakhon", 1037, 1751], ["Chanthaburi", 1261, 1946], ["Reang Kesei", 1633, 1868], ["Siem Reap", 1757, 1757],
    ["Sisophon", 1577, 1740], ["Svay Chek", 1575, 1664], ["Sa Kaeo", 1405, 1665], ["Prachin Buri", 1237, 1599],
    ["Pak Chong", 1256, 1471], ["Buriram", 1508, 1437], ["Surin", 1683, 1435], ["Si Sa Ket", 1855, 1414],
    ["Ubon Ratchathani", 1961, 1391], ["Pursat", 1769, 1962], ["Nakhon Phanom", 1946, 896], ["Savannakhet", 1941, 1056],
    ["Province", 1940, 1077],
  ]),
];

const labelLook: Record<Kind, { size: number; weight: number; gap: number; fill: string }> = {
  town: { size: 18, weight: 500, gap: 2, fill: "#626262" },
  city: { size: 23, weight: 600, gap: 2, fill: "#666" },
  capital: { size: 30, weight: 700, gap: 1, fill: "#666" },
  country: { size: 30, weight: 600, gap: 12, fill: "#a9a9a5" },
};

const MapLabel = styled.text<{ $kind: Kind }>`
  font-family: ${sans};
  font-size: ${(p) => labelLook[p.$kind].size}px;
  font-weight: ${(p) => labelLook[p.$kind].weight};
  letter-spacing: ${(p) => labelLook[p.$kind].gap}px;
  fill: ${(p) => labelLook[p.$kind].fill};
  stroke: #fdfaf5;
  stroke-width: 4px;
  paint-order: stroke;
`;

const ParkLabel = styled.text<{ $slanted?: boolean }>`
  font-family: ${sans};
  font-size: ${(p) => (p.$slanted ? 17 : 19)}px;
  font-weight: 600;
  font-style: ${(p) => (p.$slanted ? "italic" : "normal")};
  letter-spacing: ${(p) => (p.$slanted ? 0 : 1)}px;
  fill: #5fb55c;
  stroke: #f4faf0;
  stroke-width: 3px;
  paint-order: stroke;
`;

const PinLabel = styled.text`
  font-family: ${sans};
  font-size: 20px;
  font-weight: 700;
  letter-spacing: 1px;
  text-anchor: middle;
  fill: #3c3c40;
  stroke: #fff;
  stroke-width: 4px;
  paint-order: stroke;
`;

const Tree = ({ x, y }: { x: number; y: number }) => (
  <g transform={`translate(${x} ${y})`}>
    <circle r="13" fill="#6cc56c" />
    <path d="M0 -9 4 -3H2L6 2H3L7 6H1V8H5V9H-5V8H-1V6H-7L-3 2H-6L-2 -3H-4Z" fill="#fff" />
  </g>
);

const MapBackdrop = () => (
  <Backdrop viewBox="0 0 2048 2732" preserveAspectRatio="xMinYMin slice" aria-hidden="true">
    <rect width="2048" height="2732" fill="#f9f5ed" />
    {parks.map((p) => <polygon key={p} points={p} fill="#d3ebd2" />)}
    {seas.map((p) => <polygon key={p} points={p} fill="#ade1f6" />)}
    {islands.map((p) => <polygon key={p} points={p} fill="#f9f5ed" />)}
    <g fill="none" strokeLinejoin="round">
      {rivers.map((p) => <polyline key={p} points={p} stroke="#9fdcf5" strokeWidth="4" />)}
      {lanes.map((p) => <polyline key={p} points={p} stroke="#d3d0c9" strokeWidth="1.5" />)}
      {borders.map((p) => <polyline key={p} points={p} stroke="#fad5cc" strokeWidth="18" />)}
      {borders.map((p) => (
        <polyline key={p} points={p} stroke="#d08d7e" strokeWidth="2.5" strokeDasharray="20 7 8 7" />
      ))}
      {roads.map((p) => <polyline key={p} points={p} stroke="#fdc253" strokeWidth="4" />)}
    </g>
    <polygon points={zone} fill="#6f96ec" fillOpacity="0.55" stroke="#5f87ec" strokeWidth="9" strokeLinejoin="round" />
    <circle cx="1074" cy="1662" r="110" fill="#e6eaf6" fillOpacity="0.5" />
    <g fill="#fff" stroke="#5f5f5f" strokeWidth="3">
      {towns.map(([x, y]) => <circle key={`${x}-${y}`} cx={x} cy={y} r="5" />)}
      <circle cx="169" cy="1032" r="7" />
      <circle cx="169" cy="1032" r="2" />
    </g>
    {places.map(({ name, x, y, kind, end }) => (
      <MapLabel key={name} x={x} y={y} $kind={kind} textAnchor={end ? "end" : "start"}>
        {name}
      </MapLabel>
    ))}
    <ParkLabel $slanted x="772" y="1299">Thungyai Naresuan</ParkLabel>
    <ParkLabel $slanted x="772" y="1317">Wildlife Sanctuary</ParkLabel>
    {["Western", "Thungyai", "Naresuan", "Wildlife", "Sanctuary"].map((line, i) => (
      <ParkLabel key={line} x="717" y={1385 + i * 20} textAnchor="middle">{line}</ParkLabel>
    ))}
    {["Dong Phayayen-", "Khao Yai", "Forest Complex"].map((line, i) => (
      <ParkLabel key={line} x="1459" y={1583 + i * 20}>{line}</ParkLabel>
    ))}
    <Tree x={717} y={1352} />
    <Tree x={1441} y={1595} />
    <g>
      <rect x="1885" y="507" width="46" height="32" rx="7" fill="#fff" stroke="#55555a" strokeWidth="2" />
      <text x="1908" y="530" textAnchor="middle" fontFamily="Roboto, sans-serif" fontWeight="700" fontSize="18" fill="#55555a">
        QL7
      </text>
    </g>
    <PinLabel x="1074" y="1685">Soi Chuchat Kamphu,</PinLabel>
    <PinLabel x="1074" y="1706">Bangkok, Thailand</PinLabel>
    <circle cx="1074" cy="1662" r="22" fill="#fff" />
    <circle cx="1074" cy="1662" r="15" fill="#1173f5" />
    <path d="M1074 1596a28 28 0 0 1 9 55l-9 11-9-11a28 28 0 0 1 9-55Z" fill="#ff5545" />
    <circle cx="1074" cy="1613" r="6" fill="#fff" />
    <path d="M1072 1620h4v18l-2 4-2-4Z" fill="#fff" />
  </Backdrop>
);

/* ---------------------------------------------------------------- icons */

const WifiIcon = () => (
  <svg width="28" height="22" viewBox="0 0 28 22" fill="none" stroke="#000" strokeWidth="4">
    <path d="M2 8.500a17 17 0 0 1 24 0" />
    <path d="M7 13.500a10 10 0 0 1 14 0" />
    <path d="M14 21.500 10.200 17.300a5.500 5.500 0 0 1 7.600 0Z" fill="#000" stroke="none" />
  </svg>
);

const ArrowIcon = () => (
  <svg width="20" height="20" viewBox="0 0 20 20" fill="none" stroke="#000" strokeWidth="2" strokeLinejoin="round">
    <path d="M18 2 2 9.500 9.500 10.500 11 18.500Z" />
  </svg>
);

const BatteryIcon = () => (
  <svg width="54" height="24" viewBox="0 0 54 24">
    <rect x="1" y="1" width="46" height="22" rx="6" fill="none" stroke="#0f5480" strokeWidth="2" />
    <rect x="4" y="4" width="40" height="16" rx="3" fill="#000" />
    <path d="M50 8q3 1 3 4t-3 4Z" fill="#0f5480" />
  </svg>
);

const MagnifierIcon = () => (
  <svg width="41" height="40" viewBox="0 0 41 40" fill="none" stroke="#5f5f5f">
    <circle cx="26" cy="14.500" r="12" strokeWidth="3.500" />
    <path d="m13 27 4-4" strokeWidth="3.500" />
    <path d="M3.500 35.500 14 26" strokeWidth="8" />
  </svg>
);

const PlaneIcon = () => (
  <svg width="40" height="42" viewBox="0 0 40 42" fill="none" stroke="#1f8fe0" strokeWidth="2" strokeLinejoin="round">
    <path d="M38 2.500 1.500 18.500q0 1.500 1 2L20 23.500l2.500 16q1 1.500 2 0L38.500 3Z" />
    <path d="M37.500 3 20 23.500" />
  </svg>
);

const WarningIcon = () => (
  <svg width="40" height="34" viewBox="0 0 40 34">
    <path d="M18 1.500q2-2.500 4 0L39.600 31q.8 3-1.600 3H2q-2.400 0-1.600-3Z" fill="#fe0000" />
    <path d="M18.200 13q0-2 1.800-2t1.800 2l-.6 9h-2.400Z" fill="#b9a9a8" />
    <circle cx="20" cy="27.500" r="1.800" fill="#b9a9a8" />
  </svg>
);

const UndoIcon = () => (
  <svg width="43" height="40" viewBox="0 0 43 40" fill="none" stroke="currentColor" strokeWidth="3.500">
    <path d="M8 9.500H28a13.500 14 0 0 1 0 28H3" />
    <path d="M0 9.500 12 1V18Z" fill="currentColor" stroke="none" />
  </svg>
);

const RedoIcon = () => (
  <svg width="43" height="40" viewBox="0 0 43 40" fill="none" stroke="currentColor" strokeWidth="3.500">
    <path d="M35 9.500H15a13.500 14 0 0 0 0 28H40" />
    <path d="M43 9.500 31 1V18Z" fill="currentColor" stroke="none" />
  </svg>
);

const PasteIcon = () => (
  <svg width="37" height="40" viewBox="0 0 37 40" fill="none" stroke="currentColor">
    <rect x="1.500" y="13.500" width="24" height="24" strokeWidth="3" />
    <path d="M8 10V6q0-2 2-2h6V1h12v3h6q2 0 2 2v22q0 2-2 2h-4V10Z" fill="currentColor" stroke="none" />
    <path d="M19 5h6" stroke="#d0d3da" strokeWidth="2" />
  </svg>
);

const SmileIcon = () => (
  <svg width="42" height="42" viewBox="0 0 42 42">
    <circle cx="21" cy="21" r="19.500" fill="none" stroke="#000" strokeWidth="2.500" />
    <ellipse cx="15" cy="14.500" rx="2.600" ry="3" />
    <ellipse cx="27" cy="14.500" rx="2.600" ry="3" />
    <path d="M8 22q13 5 26 0-1.500 13-13 13T8 22Z" />
    <path d="M10.500 25q10.500 3.500 21 0l-.8 3q-9.700 3-19.400 0Z" fill="#a9adb8" />
  </svg>
);

const MicIcon = () => (
  <svg width="25" height="42" viewBox="0 0 25 42" fill="none" stroke="#000" strokeWidth="2.500" strokeLinecap="round">
    <rect x="6.500" y="2" width="12" height="26" rx="6" />
    <path d="M1.500 18v4.500a11 11 0 0 0 22 0V18M12.500 33.500V40M6 40h13" />
  </svg>
);

const HideKeyboardIcon = () => (
  <svg width="59" height="46" viewBox="0 0 59 46" fill="none" stroke="#000">
    <rect x="1.500" y="1.500" width="56" height="27" rx="2" strokeWidth="3" />
    <path d="M6 8.500H54M6 15H54" strokeWidth="4" strokeDasharray="4.500 2.700" />
    <path d="M6 22h5M14 22h31M48 22h5" strokeWidth="4" />
    <path d="m20 36.500 9.500 8 9.500-8" strokeWidth="2.500" />
  </svg>
);

/* ----------------------------------------------------------------- data */

const results: [string, string][] = [
  ["โครงการอ่างเก็บน้ำแม่ต๊าก", "MAE TAK RESERVOIR PROJECT"],
  ["ร้านส้มตำเทียมจันทร์", "SOMTAM THIAM CHAN RESTAURANT"],
  ["ดินไม้งาม", "DIN MAI NGAM RESTAURANT"],
  ["ร้านครัวกาญ", "KHRUA KAN RESTAURANT"],
  ["นครปฐมโอชา", "NAKHON PATHOM OCHA RESTAURANT"],
  ["สวนอาหารริมบึง", "RIM BUENG RESTAURANT"],
  ["น้ำหมานรีสอร์ท", "NAM MAN RESORT"],
  ["ไร่ม่วงรีสอร์ท", "RAI MUANG RESORT"],
  ["สุวรรณเลิศรีสอร์ท", "SUWANLOET RESORT"],
  ["ร้านอาหารภิรมพร", "PHIROMPHON RESTAURANT"],
  ["โรงรีดยางพารา", "RUBBER PRESSED FACTORY"],
  ["ร้านอาหารพุทธ-รักษา", "PHUTTHA RAKSA RESTAURANT"],
  ["อ่างเก็บน้ำห้วยน้ำหมาน", "HUAI NAM MAN RESERVOIR"],
  ["บาร์บีคิวรีสอร์ท", "BARBECUE RESORT"],
  ["ตลาดสดเทศบาล 3", "THETSABAN 3 FRESH MARKET"],
  ["รูปปั้นสมเด็จพระนเรศวรมหาร", "KING NARESUAN THE GREAT MONUMENT"],
  ["กังเกียวเฮ้าส์รีสอร์ท", "KANG KIAO HOUSE RESORT"],
];

const numberPairs = ["~`", "!1", "@2", "#3", "$4", "%5", "^6", "&7", "*8", "(9", ")0", "_-", "+="];

const PairKeys = ({ pairs, small }: { pairs: string[]; small?: boolean }) => (
  <>
    {pairs.map(([upper, lower]) => (
      <Key key={upper} type="button">
        <Pair $small={small}>
          <span>{upper}</span>
          <span>{lower}</span>
        </Pair>
      </Key>
    ))}
  </>
);

const LetterKeys = ({ letters }: { letters: string }) => (
  <>
    {[...letters].map((letter) => (
      <Key key={letter} type="button">
        <Letter>{letter}</Letter>
      </Key>
    ))}
  </>
);

interface ActionKeyProps {
  grow: number;
  tone: Tone;
  align: "start" | "end";
  label?: string;
  children: React.ReactNode;
}

const ActionKey = ({ grow, tone, align, label, children }: ActionKeyProps) => (
  <Key type="button" $grow={grow} $tone={tone} $align={align} aria-label={label}>
    <Caption>{children}</Caption>
  </Key>
);

/* ------------------------------------------------------------------ app */

export default function App() {
  const [query, setQuery] = useState("res");

  return (
    <>
      <GlobalStyle />
      <Screen>
        <MapBackdrop />
        <StatusBar>
          <span>11:00 AM</span>
          <span>Sun Jun 2</span>
          <StatusIcons>
            <WifiIcon />
            <ArrowIcon />
            <span>100%</span>
            <BatteryIcon />
          </StatusIcons>
        </StatusBar>

        <Content>
          <SearchBar role="search" onSubmit={(e) => e.preventDefault()}>
            <SearchLabel htmlFor="query" aria-label="Search">
              <MagnifierIcon />
            </SearchLabel>
            <SearchInput id="query" value={query} onChange={(e) => setQuery(e.target.value)} />
            <Caret />
            <LocateButton type="button" aria-label="My location">
              <PlaneIcon />
            </LocateButton>
          </SearchBar>

          <Results>
            {results.map(([thai, latin]) => (
              <Result key={latin}>
                <ResultButton type="button">
                  <ThaiName lang="th">{thai}</ThaiName>
                  <LatinName>{latin}</LatinName>
                </ResultButton>
              </Result>
            ))}
          </Results>

          <Alert role="alert">
            <WarningIcon />
            <span lang="th">คุณอยู่นอกขอบเขตทางเดินรถประจำถิ่น</span>
          </Alert>
        </Content>

        <Keyboard aria-label="Keyboard">
          <Toolbar>
            <EditTools>
              <ToolButton type="button" aria-label="Undo"><UndoIcon /></ToolButton>
              <ToolButton type="button" aria-label="Redo" disabled><RedoIcon /></ToolButton>
              <ToolButton type="button" aria-label="Paste" disabled><PasteIcon /></ToolButton>
            </EditTools>
            <Suggestions>
              <Suggestion type="button">“res”</Suggestion>
              <Suggestion type="button">rest</Suggestion>
              <Suggestion type="button">respect</Suggestion>
            </Suggestions>
          </Toolbar>

          <KeyRow $short>
            <PairKeys pairs={numberPairs} small />
            <ActionKey grow={212} tone="grey" align="end">delete</ActionKey>
          </KeyRow>
          <KeyRow>
            <ActionKey grow={212} tone="mixed" align="start">tab</ActionKey>
            <LetterKeys letters="qwertyuiop" />
            <PairKeys pairs={["{[", "}]", "|\\"]} />
          </KeyRow>
          <KeyRow>
            <ActionKey grow={238} tone="cool" align="start">caps lock</ActionKey>
            <LetterKeys letters="asdfghjkl" />
            <PairKeys pairs={[":;", "”’"]} />
            <ActionKey grow={240} tone="mixed" align="end">return</ActionKey>
          </KeyRow>
          <KeyRow>
            <ActionKey grow={308} tone="cool" align="start">shift</ActionKey>
            <LetterKeys letters="zxcvbnm" />
            <PairKeys pairs={["<,", ">.", "?/"]} />
            <ActionKey grow={310} tone="cool" align="end">shift</ActionKey>
          </KeyRow>
          <KeyRow>
            <ActionKey grow={188} tone="grey" align="start" label="Emoji"><SmileIcon /></ActionKey>
            <ActionKey grow={186} tone="grey" align="start">.?123</ActionKey>
            <ActionKey grow={186} tone="grey" align="start" label="Dictate"><MicIcon /></ActionKey>
            <Key type="button" $grow={830} aria-label="Space" />
            <ActionKey grow={286} tone="grey" align="end">.?123</ActionKey>
            <ActionKey grow={286} tone="grey" align="end" label="Hide keyboard"><HideKeyboardIcon /></ActionKey>
          </KeyRow>
        </Keyboard>
      </Screen>
    </>
  );
}
